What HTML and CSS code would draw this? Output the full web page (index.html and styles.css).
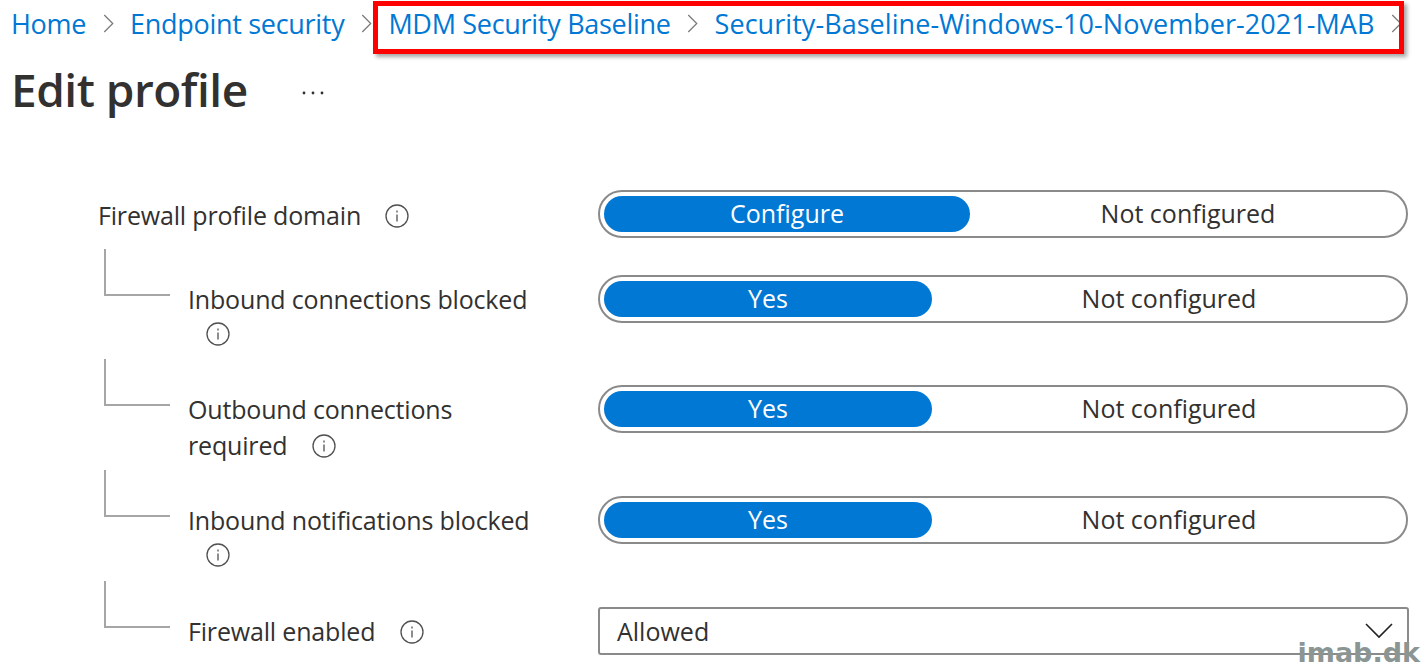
FILE: index.html
```html
<!DOCTYPE html>
<html lang="en">
<head>
    <meta charset="UTF-8">
    <meta name="viewport" content="width=device-width, initial-scale=1.0">
    <title>Edit profile</title>
    <link rel="stylesheet" href="styles.css">
</head>
<body>
    <nav class="crumbs">
        <a class="crumb">Home</a>
        <svg class="chevron" viewBox="0 0 10 18"><path d="M1 1l8 8-8 8"/></svg>
        <a class="crumb">Endpoint security</a>
        <svg class="chevron" viewBox="0 0 10 18"><path d="M1 1l8 8-8 8"/></svg>
        <a class="crumb">MDM Security Baseline</a>
        <svg class="chevron" viewBox="0 0 10 18"><path d="M1 1l8 8-8 8"/></svg>
        <a class="crumb crumb-long">Security-Baseline-Windows-10-November-2021-MAB</a>
        <svg class="chevron" viewBox="0 0 10 18"><path d="M1 1l8 8-8 8"/></svg>
    </nav>
    <div class="highlight"></div>

    <header class="title-row">
        <h1>Edit profile</h1>
        <svg class="more" viewBox="0 0 24 4"><circle cx="3" cy="2" r="1.4"/><circle cx="12" cy="2" r="1.4"/><circle cx="21" cy="2" r="1.4"/></svg>
    </header>

    <main class="form">
        <div class="row row-top">
            <div class="label">
                <span>Firewall profile domain</span>
                <svg class="info info-inline" viewBox="0 0 24 24"><circle cx="12" cy="12" r="11"/><path d="M12 10.5v7M12 6.5v2"/></svg>
            </div>
            <div class="toggle">
                <div class="on on-wide">Configure</div>
                <div class="off">Not configured</div>
            </div>
        </div>

        <div class="row row-child">
            <div class="connector"></div>
            <div class="label label-child">
                <span>Inbound connections blocked</span>
                <svg class="info info-below" viewBox="0 0 24 24"><circle cx="12" cy="12" r="11"/><path d="M12 10.5v7M12 6.5v2"/></svg>
            </div>
            <div class="toggle">
                <div class="on">Yes</div>
                <div class="off">Not configured</div>
            </div>
        </div>

        <div class="row row-child">
            <div class="connector"></div>
            <div class="label label-child">
                <span>Outbound connections<br>required</span>
                <svg class="info info-inline" viewBox="0 0 24 24"><circle cx="12" cy="12" r="11"/><path d="M12 10.5v7M12 6.5v2"/></svg>
            </div>
            <div class="toggle">
                <div class="on">Yes</div>
                <div class="off">Not configured</div>
            </div>
        </div>

        <div class="row row-child">
            <div class="connector"></div>
            <div class="label label-child">
                <span>Inbound notifications blocked</span>
                <svg class="info info-below" viewBox="0 0 24 24"><circle cx="12" cy="12" r="11"/><path d="M12 10.5v7M12 6.5v2"/></svg>
            </div>
            <div class="toggle">
                <div class="on">Yes</div>
                <div class="off">Not configured</div>
            </div>
        </div>

        <div class="row row-child">
            <div class="connector"></div>
            <div class="label label-child">
                <span>Firewall enabled</span>
                <svg class="info info-inline" viewBox="0 0 24 24"><circle cx="12" cy="12" r="11"/><path d="M12 10.5v7M12 6.5v2"/></svg>
            </div>
            <div class="select">
                <span>Allowed</span>
                <svg class="caret" viewBox="0 0 28 16"><path d="M1 1l13 13L27 1"/></svg>
            </div>
        </div>
    </main>

    <div class="watermark">imab.dk</div>
</body>
</html>
```

FILE: styles.css
```css
body {
    margin: 0;
    width: 1423px;
    height: 666px;
    overflow: hidden;
    position: relative;
    background-color: #fff;
    font-family: "Open Sans", "Noto Sans", sans-serif;
    color: #323130;
}
.crumbs {
    display: flex;
    align-items: center;
    height: 46px;
    padding-left: 11px;
    white-space: nowrap;
}
.crumb {
    font-size: 27px;
    letter-spacing: -0.3px;
    color: #0078d4;
}
.crumb-long {
    letter-spacing: 0.05px;
}
.chevron {
    width: 11px;
    height: 19px;
    margin: 0 16.5px;
    flex: none;
}
.chevron path {
    fill: none;
    stroke: #7a7a7a;
    stroke-width: 1.2;
}
.highlight {
    position: absolute;
    left: 373px;
    top: 1px;
    width: 1021px;
    height: 43px;
    border: 5px solid #f00;
    box-shadow: 3px 3px 4px rgba(0, 0, 0, 0.35);
}
.title-row {
    display: flex;
    align-items: center;
    padding-left: 11px;
    height: 86px;
}
h1 {
    margin: 0;
    font-size: 46px;
    font-weight: 600;
    letter-spacing: -0.5px;
    line-height: 84px;
}
.more {
    width: 24px;
    height: 4px;
    margin-left: 53px;
    margin-top: 8px;
    fill: #323130;
}
.form {
    padding: 58px 14px 0 98px;
}
.row {
    display: flex;
    font-size: 25px;
}
.row-top {
    height: 58.8px;
}
.row-top .label {
    width: 500px;
    padding-top: 7px;
}
.row-child {
    height: 110.6px;
}
.connector {
    width: 64px;
    height: 45px;
    margin-left: 6px;
    flex: none;
    border-left: 2px solid #a6a6a6;
    border-bottom: 2px solid #a6a6a6;
}
.label {
    box-sizing: border-box;
    line-height: 36px;
    letter-spacing: -0.17px;
    white-space: nowrap;
}
.label-child {
    width: 410px;
    margin-left: 18px;
    padding-top: 32px;
}
.info {
    width: 24px;
    height: 24px;
    fill: none;
    stroke: #505050;
    stroke-width: 1.3;
}
.info-inline {
    margin-left: 18px;
    vertical-align: -3px;
}
.info-below {
    display: block;
    margin: 5px 0 0 18px;
}
.toggle {
    box-sizing: border-box;
    display: flex;
    width: 810px;
    height: 48px;
    padding: 4px;
    border: 2px solid #8a8a8a;
    border-radius: 24px;
}
.row-child .toggle,
.row-child .select {
    margin-top: 26px;
}
.on {
    width: 328px;
    flex: none;
    border-radius: 18px;
    background-color: #0078d4;
    color: #fff;
    text-align: center;
    line-height: 35px;
}
.on-wide {
    width: 366px;
}
.off {
    flex: 1;
    padding-left: 4px;
    text-align: center;
    line-height: 35px;
}
.select {
    box-sizing: border-box;
    display: flex;
    justify-content: space-between;
    align-items: center;
    width: 811px;
    height: 48px;
    padding: 0 14px 0 17px;
    border: 2px solid #8a8a8a;
    border-radius: 3px;
}
.caret {
    width: 28px;
    height: 16px;
    fill: none;
    stroke: #222;
    stroke-width: 1.6;
}
.watermark {
    position: absolute;
    right: 3px;
    bottom: 0;
    font-family: "DejaVu Sans", sans-serif;
    font-size: 27px;
    font-weight: 700;
    line-height: 27px;
    color: #8b9694;
}
```
